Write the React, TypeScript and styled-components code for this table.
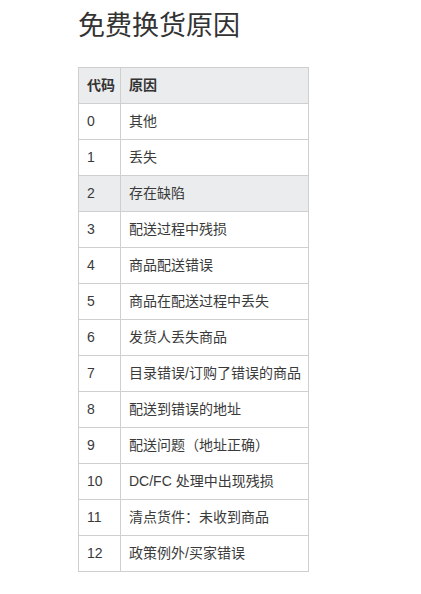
import styled, { createGlobalStyle } from 'styled-components';

const GlobalStyle = createGlobalStyle`
	body {
		margin: 0;
		background: #fff;
		font-family: "Liberation Sans", "Noto Sans CJK SC", sans-serif;
		color: #333;
	}
`;

const Page = styled.div`
	padding: 9px 78px 0;
`;

const Title = styled.h1`
	margin: 0 0 24px;
	font-size: 27px;
	line-height: 34px;
	font-weight: 400;
	color: #333;
`;

const Table = styled.table`
	border-collapse: collapse;
	font-size: 14px;
	line-height: 19px;
`;

const Cell = styled.td<{ $first?: boolean }>`
	border: 1px solid #cfcfcf;
	padding: ${(p) => (p.$first ? '8px 5px 8px 8px' : '8px 7px 8px 8px')};
	width: ${(p) => (p.$first ? '24px' : '170px')};
	vertical-align: middle;
	white-space: nowrap;
	color: #3a3a3a;
`;

const HeadCell = styled(Cell).attrs({ as: 'th' })`
	font-weight: 700;
	text-align: left;
	color: #333;
`;

const Row = styled.tr<{ $shaded?: boolean }>`
	background: ${(p) => (p.$shaded ? '#eaecee' : '#fff')};
`;

const reasons: [string, string][] = [
	['0', '其他'],
	['1', '丢失'],
	['2', '存在缺陷'],
	['3', '配送过程中残损'],
	['4', '商品配送错误'],
	['5', '商品在配送过程中丢失'],
	['6', '发货人丢失商品'],
	['7', '目录错误/订购了错误的商品'],
	['8', '配送到错误的地址'],
	['9', '配送问题（地址正确）'],
	['10', 'DC/FC 处理中出现残损'],
	['11', '清点货件：未收到商品'],
	['12', '政策例外/买家错误'],
];

export default function App() {
	return (
		<Page>
			<GlobalStyle />
			<Title>免费换货原因</Title>
			<Table>
				<thead>
					<Row $shaded>
						<HeadCell $first>代码</HeadCell>
						<HeadCell>原因</HeadCell>
					</Row>
				</thead>
				<tbody>
					{reasons.map(([code, text]) => (
						<Row key={code} $shaded={code === '2'}>
							<Cell $first>{code}</Cell>
							<Cell>{text}</Cell>
						</Row>
					))}
				</tbody>
			</Table>
		</Page>
	);
}
